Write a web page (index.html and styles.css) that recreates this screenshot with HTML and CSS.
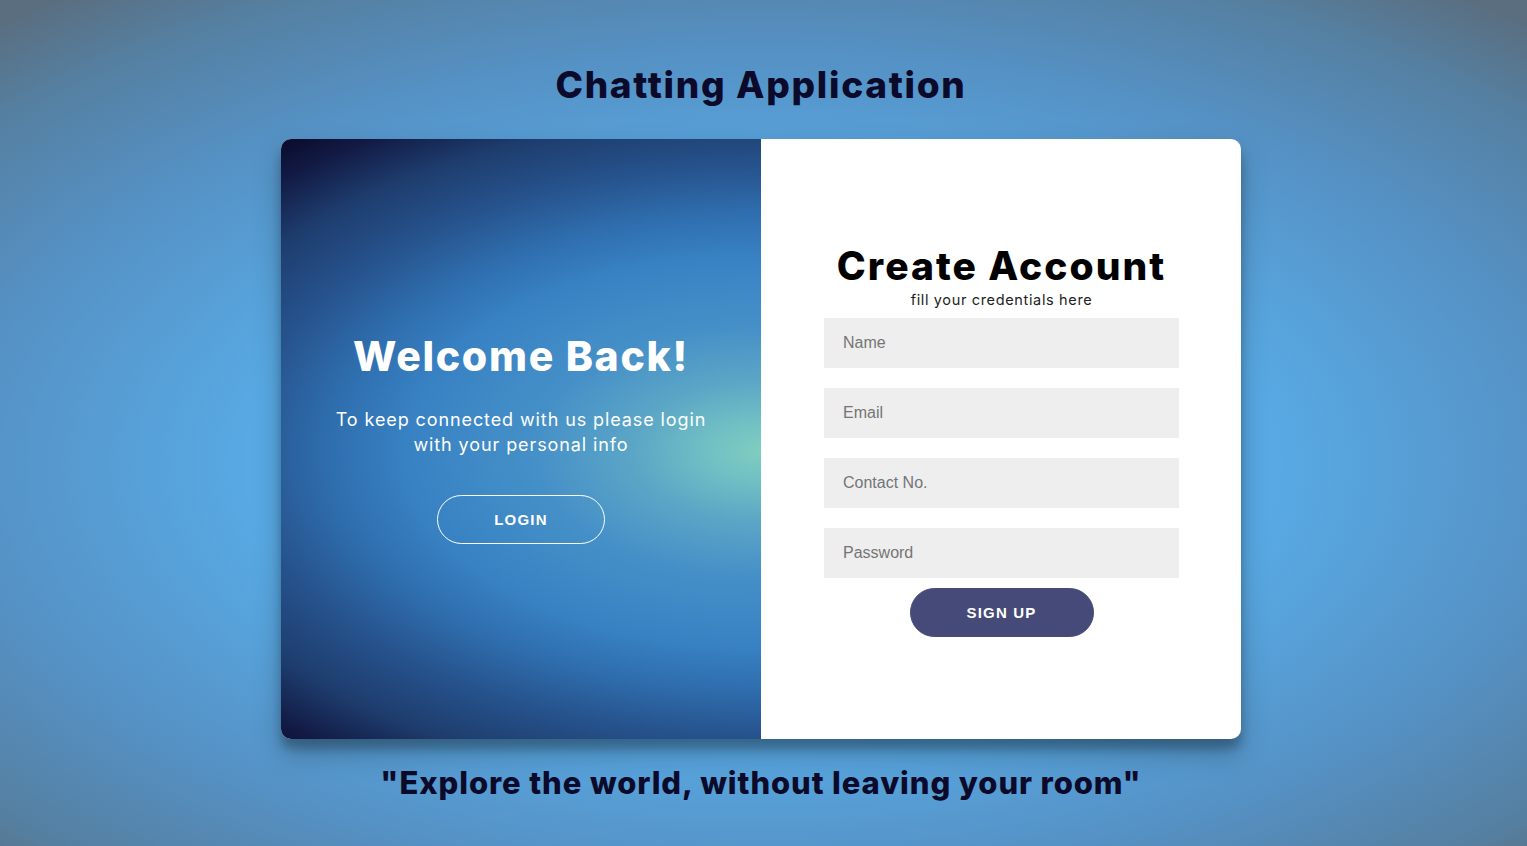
FILE: index.html
```html
<!DOCTYPE html>
<html>
<head>
<meta charset="utf-8">
<title>Chatting Application</title>
<link rel="stylesheet" href="styles.css">
</head>
<body>
<main class="page">
  <h2 class="app-title">Chatting Application</h2>
  <div class="card">
    <section class="overlay">
      <h1 class="welcome">Welcome Back!</h1>
      <p class="welcome-text">To keep connected with us please login<br>with your personal info</p>
      <button class="btn btn-ghost">Login</button>
    </section>
    <section class="form-panel">
      <form class="signup">
        <h1 class="form-title">Create Account</h1>
        <span class="form-sub">fill your credentials here</span>
        <input class="field" type="text" placeholder="Name">
        <input class="field" type="email" placeholder="Email">
        <input class="field" type="text" placeholder="Contact No.">
        <input class="field" type="password" placeholder="Password">
        <button class="btn btn-solid" type="button">Sign Up</button>
      </form>
    </section>
  </div>
  <h2 class="quote">"Explore the world, without leaving your room"</h2>
</main>
</body>
</html>
```

FILE: styles.css
```css
* { box-sizing: border-box; }
html, body { height: 100%; }
body {
  margin: 0;
  font-family: "Inter", "Noto Sans", sans-serif;
  background: radial-gradient(ellipse 75% 70% at 50% 55%, #56a8e4 0%, #58a9e4 45%, #5591c4 70%, #5580a2 88%, #5a6e80 100%);
  overflow: hidden;
}
.page {
  width: 1522px;
  height: 846px;
  display: flex;
  flex-direction: column;
  align-items: center;
}
.app-title {
  margin: 62px 0 0;
  height: 77px;
  font-size: 37px;
  font-weight: 800;
  color: #0b0a2a;
  letter-spacing: 1.7px;
}
.card {
  width: 960px;
  height: 600px;
  border-radius: 10px;
  overflow: hidden;
  display: grid;
  grid-template-columns: 480px 480px;
  box-shadow: 0 14px 28px rgba(0,0,0,0.25), 0 10px 10px rgba(0,0,0,0.22);
  background: #fff;
}
.overlay {
  background: radial-gradient(ellipse 800px 440px at 100% 52%, #80cdc0 0%, #70bfc4 7%, #5ba6c6 16%, #4690c8 28%, #3882c4 44%, #2f6eae 54%, #26528c 65%, #1e3d6e 76%, #121a44 86%, #0a0a2a 93%);
  color: #fff;
  display: flex;
  flex-direction: column;
  align-items: center;
  justify-content: center;
  text-align: center;
  padding: 0 30px 4px;
}
.welcome {
  margin: 0;
  font-size: 41px;
  font-weight: 800;
  letter-spacing: 1.7px;
}
.welcome-text {
  margin: 26px 0 38px;
  font-size: 18px;
  line-height: 25px;
  font-weight: 400;
  letter-spacing: 0.9px;
}
.btn {
  font-family: "Liberation Sans", Arial, sans-serif;
  font-size: 15px;
  font-weight: 700;
  letter-spacing: 1.2px;
  text-transform: uppercase;
  color: #fff;
  border-radius: 25px;
  height: 49px;
  cursor: pointer;
}
.btn-ghost {
  width: 168px;
  background: transparent;
  border: 1px solid #fff;
}
.form-panel {
  display: flex;
  align-items: center;
  justify-content: center;
  padding: 0 62px 0 63px;
}
.signup {
  width: 100%;
  display: flex;
  flex-direction: column;
  align-items: center;
  margin-top: 1px;
}
.form-title {
  margin: 0;
  font-size: 39px;
  font-weight: 800;
  color: #000;
  line-height: 46px;
  letter-spacing: 2px;
}
.form-sub {
  font-size: 14.5px;
  color: #222;
  margin: 2px 0 10px;
  letter-spacing: 0.65px;
}
.field {
  width: 100%;
  height: 50px;
  border: none;
  background: #eee;
  padding: 0 19px;
  margin-bottom: 20px;
  font-family: "Liberation Sans", Arial, sans-serif;
  font-size: 16px;
  color: #333;
  outline: none;
}
.field::placeholder { color: #757575; }
.field:last-of-type { margin-bottom: 10px; }
.btn-solid {
  width: 184px;
  background: #464a78;
  border: 1px solid #464a78;
}
.quote {
  margin: 25px 0 0;
  font-size: 31px;
  font-weight: 800;
  color: #0b0a2a;
  letter-spacing: 0.9px;
}
```
